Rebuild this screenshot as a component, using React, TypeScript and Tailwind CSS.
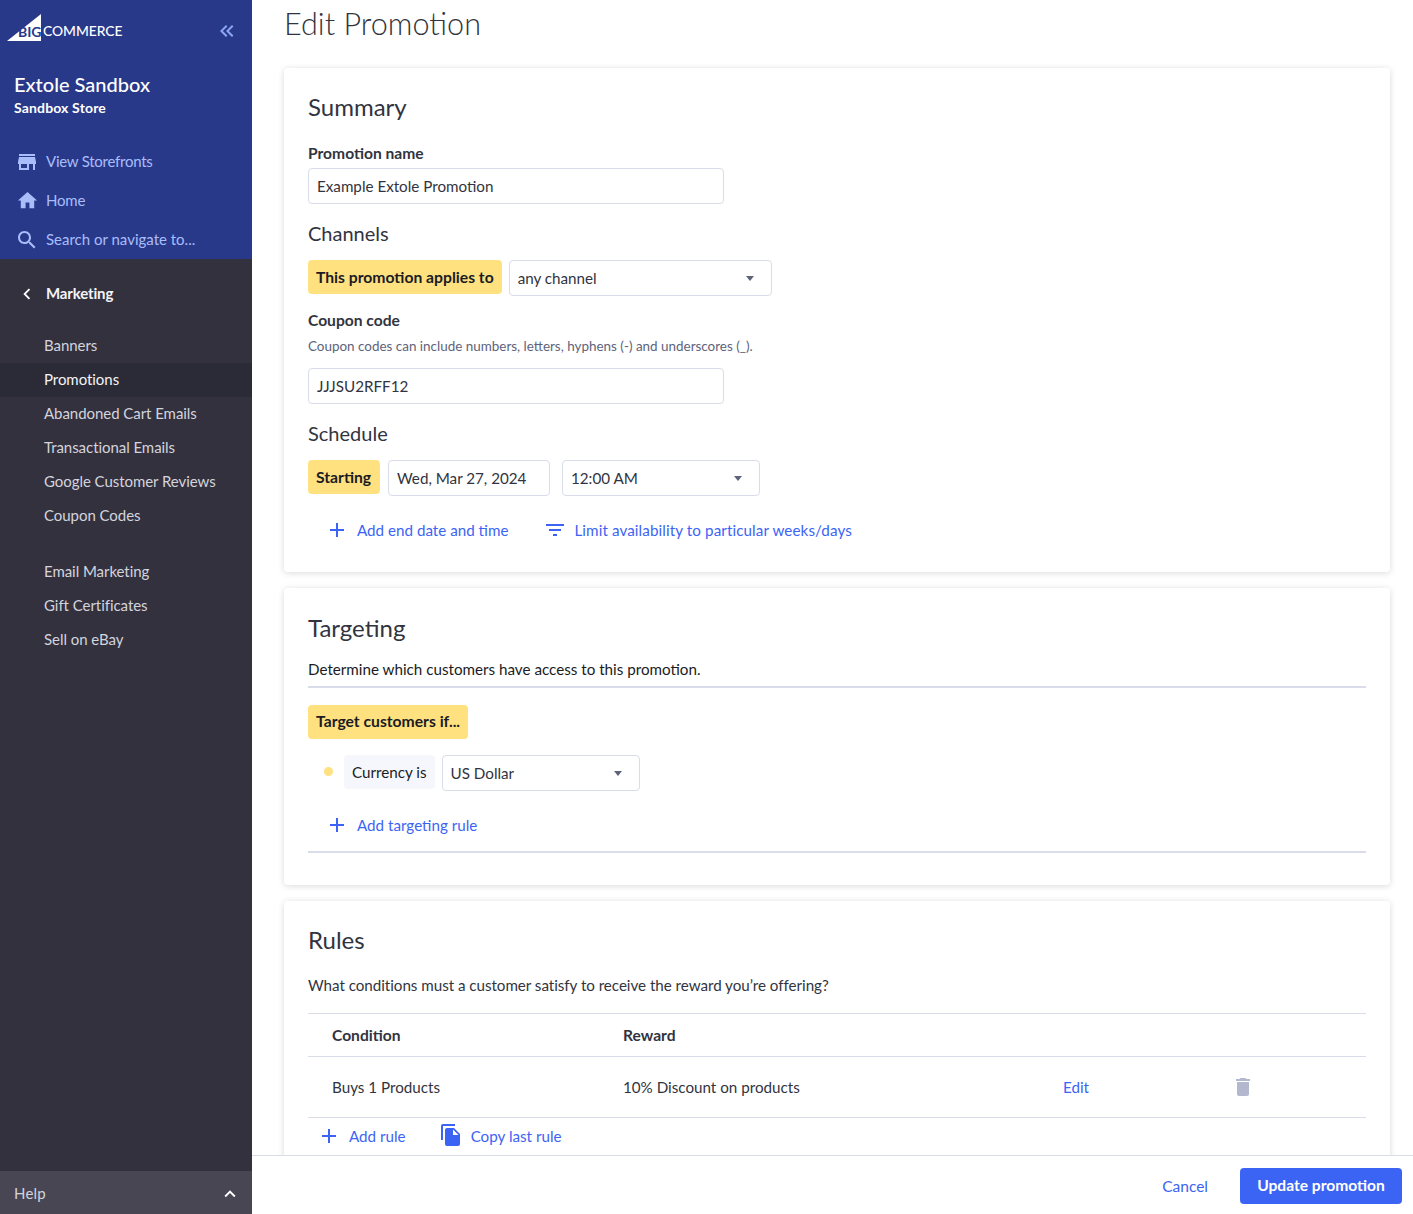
import type { ReactNode } from "react";

const STORE = "M20 4H4v2h16V4zm1 10v-2l-1-5H4l-1 5v2h1v6h10v-6h4v6h2v-6h1zm-9 4H6v-4h6v4z";
const HOME = "M10 20v-6h4v6h5v-8h3L12 3 2 12h3v8z";
const SEARCH =
    "M15.5 14h-.79l-.28-.27C15.41 12.59 16 11.11 16 9.5 16 5.91 13.09 3 9.5 3S3 5.91 3 9.5 5.91 16 9.5 16c1.61 0 3.09-.59 4.23-1.57l.27.28v.79l5 4.99L20.49 19l-4.99-5zm-6 0C7.01 14 5 11.99 5 9.5S7.01 5 9.5 5 14 7.01 14 9.5 11.99 14 9.5 14z";
const ADD = "M19 13h-6v6h-2v-6H5v-2h6V5h2v6h6v2z";
const FILTER = "M10 18h4v-2h-4v2zM3 6v2h18V6H3zm3 7h12v-2H6v2z";
const COPY =
    "M16 1H4c-1.1 0-2 .9-2 2v14h2V3h12V1zm-1 4l6 6v10c0 1.1-.9 2-2 2H7.99C6.89 23 6 22.1 6 21l.01-14c0-1.1.89-2 1.99-2h7zm-1 7h5.5L14 6.5V12z";
const TRASH = "M6 19c0 1.1.9 2 2 2h8c1.1 0 2-.9 2-2V7H6v12zM19 4h-3.5l-1-1h-5l-1 1H5v2h14V4z";
const CHEVRON_LEFT = "M15.41 7.41L14 6l-6 6 6 6 1.41-1.41L10.83 12z";
const CHEVRON_UP = "M12 8l-6 6 1.41 1.41L12 10.83l4.59 4.58L18 14z";
const DOUBLE_LEFT =
    "M18.41 7.41L17 6l-6 6 6 6 1.41-1.41L13.83 12zM12.41 7.41L11 6l-6 6 6 6 1.41-1.41L7.83 12z";

function Icon({ d, className }: { d: string; className: string }) {
    return (
        <svg viewBox="0 0 24 24" fill="currentColor" className={className}>
            <path d={d} />
        </svg>
    );
}

function Logo() {
    return (
        <div className="relative h-[28px] w-[120px]">
            <svg viewBox="0 0 35 27" className="absolute left-0 top-0 h-[27px] w-[35px]">
                <polygon points="0,27 34,0 34,27" fill="#ffffff" />
            </svg>
            <span className="absolute left-[11px] top-[9px] text-[14px] font-bold leading-[17px] text-[#28398a]">
                BIG
            </span>
            <span className="absolute left-[36px] top-[8px] text-[13.8px] font-medium leading-[17px] text-white">
                COMMERCE
            </span>
        </div>
    );
}

function TopLink({ d, label, size, textClass }: { d: string; label: string; size: string; textClass: string }) {
    return (
        <div className="flex h-[39px] items-center text-[#a9bdfb]">
            <div className="flex w-[46px] justify-center pl-[8px]">
                <Icon d={d} className={size} />
            </div>
            <span className={`text-[15px] ${textClass}`}>{label}</span>
        </div>
    );
}

function SideItem({ label, active }: { label: string; active?: boolean }) {
    return (
        <div
            className={`flex h-[34px] items-center pb-[2px] pl-[44px] text-[15px] tracking-[-0.05px] ${
                active ? "bg-[#2b2a37] text-[#f4f4f7]" : "text-[#d3d4dc]"
            }`}
        >
            {label}
        </div>
    );
}

function Sidebar() {
    return (
        <aside className="flex h-full w-[252px] shrink-0 flex-col bg-[#34313f]">
            <div className="h-[259px] bg-[#28398a] pt-[14px]">
                <div className="flex items-start justify-between pl-[7px] pr-[13px]">
                    <Logo />
                    <Icon d={DOUBLE_LEFT} className="mt-[5px] h-[24px] w-[24px] text-[#8da5f5]" />
                </div>
                <div className="mt-[27px] pl-[14px] text-[20px] font-medium leading-[28px] text-white">Extole Sandbox</div>
                <div className="pl-[14px] text-[14px] font-bold leading-[20px] tracking-[0.15px] text-white">Sandbox Store</div>
                <div className="mt-[24px]">
                    <TopLink d={STORE} label="View Storefronts" size="h-[24px] w-[24px]" textClass="tracking-[-0.25px]" />
                    <TopLink d={HOME} label="Home" size="h-[23px] w-[23px]" textClass="tracking-[-0.2px]" />
                    <TopLink d={SEARCH} label="Search or navigate to..." size="h-[24px] w-[24px]" textClass="tracking-[0px]" />
                </div>
            </div>
            <div className="flex h-[69px] items-center text-white">
                <div className="flex w-[46px] justify-center pl-[8px]">
                    <Icon d={CHEVRON_LEFT} className="h-[22px] w-[22px]" />
                </div>
                <span className="text-[15px] font-bold tracking-[-0.15px] text-[#f4f4f7]">Marketing</span>
            </div>
            <div className="pt-[1px]">
                <SideItem label="Banners" />
                <SideItem label="Promotions" active />
                <SideItem label="Abandoned Cart Emails" />
                <SideItem label="Transactional Emails" />
                <SideItem label="Google Customer Reviews" />
                <SideItem label="Coupon Codes" />
            </div>
            <div className="mt-[22px]">
                <SideItem label="Email Marketing" />
                <SideItem label="Gift Certificates" />
                <SideItem label="Sell on eBay" />
            </div>
            <div className="mt-auto flex h-[43px] items-center justify-between bg-[#484653] pl-[14px] pr-[11px] pt-[2px] text-[#d3d4dc]">
                <span className="text-[15px] tracking-[0.2px]">Help</span>
                <Icon d={CHEVRON_UP} className="h-[22px] w-[22px] text-white" />
            </div>
        </aside>
    );
}

function Card({ className, children }: { className: string; children: ReactNode }) {
    return (
        <section className={`rounded-[4px] bg-white px-[24px] shadow-[0_1px_6px_rgba(49,52,64,0.18)] ${className}`}>
            {children}
        </section>
    );
}

function Field({ value, className }: { value: string; className: string }) {
    return (
        <div className={`flex h-[36px] items-center rounded-[4px] border border-[#d9dce9] bg-white pl-[8px] pt-[1px] text-[#313440] ${className}`}>
            {value}
        </div>
    );
}

function Select({ value, className }: { value: string; className: string }) {
    return (
        <div className={`flex h-[36px] items-center justify-between rounded-[4px] border border-[#d9dce9] bg-white pl-[8px] pr-[17px] text-[#313440] ${className}`}>
            <span className="pt-[1px]">{value}</span>
            <span className="h-0 w-0 border-x-[4px] border-t-[5px] border-x-transparent border-t-[#5e637a]" />
        </div>
    );
}

function Chip({ children, className }: { children: ReactNode; className?: string }) {
    return (
        <div className={`flex h-[34px] items-center rounded-[4px] bg-[#ffe180] px-[8px] text-[15.7px] font-bold text-[#1a1b23] ${className ?? ""}`}>
            {children}
        </div>
    );
}

function LinkBtn({ d, label, iconClass, textClass }: { d: string; label: string; iconClass: string; textClass?: string }) {
    return (
        <div className="flex items-center text-[#3c64f4]">
            <Icon d={d} className={iconClass} />
            <span className={`pt-[1px] ${textClass ?? ""}`}>{label}</span>
        </div>
    );
}

function SectionHeading({ children, className }: { children: ReactNode; className: string }) {
    return <h3 className={`text-[20px] leading-[28px] text-[#313440] ${className}`}>{children}</h3>;
}

function CardTitle({ children }: { children: ReactNode }) {
    return <h2 className="text-[24px] leading-[32px] text-[#313440]">{children}</h2>;
}

function Summary() {
    return (
        <Card className="h-[504px] pt-[23px]">
            <CardTitle>Summary</CardTitle>
            <div className="mt-[18px] text-[15.6px] font-bold leading-[24px] text-[#313440]">Promotion name</div>
            <Field value="Example Extole Promotion" className="mt-[3px] w-[416px]" />
            <SectionHeading className="mt-[15px]">Channels</SectionHeading>
            <div className="mt-[13px] flex items-start gap-[7px]">
                <Chip className="pt-[1px]">This promotion applies to</Chip>
                <Select value="any channel" className="w-[263px]" />
            </div>
            <div className="mt-[12px] text-[15.6px] font-bold leading-[24px] text-[#313440]">Coupon code</div>
            <div className="mt-[4px] text-[13.45px] leading-[20px] text-[#5e637a]">
                Coupon codes can include numbers, letters, hyphens (-) and underscores (_).
            </div>
            <Field value="JJJSU2RFF12" className="mt-[12px] w-[416px]" />
            <SectionHeading className="mt-[15px]">Schedule</SectionHeading>
            <div className="mt-[13px] flex items-start">
                <Chip className="w-[72px] pt-[1px]">Starting</Chip>
                <Field value="Wed, Mar 27, 2024" className="ml-[8px] w-[162px]" />
                <Select value="12:00 AM" className="ml-[12px] w-[198px]" />
            </div>
            <div className="mt-[22px] flex h-[24px] items-center pl-[17px]">
                <LinkBtn d={ADD} label="Add end date and time" iconClass="mr-[8px] h-[24px] w-[24px]" />
                <div className="ml-[35px]">
                    <LinkBtn
                        d={FILTER}
                        label="Limit availability to particular weeks/days"
                        iconClass="mr-[7px] h-[24px] w-[24px]"
                        textClass="tracking-[0.1px]"
                    />
                </div>
            </div>
        </Card>
    );
}

function Targeting() {
    return (
        <Card className="mt-[16px] h-[297px] pt-[24px]">
            <CardTitle>Targeting</CardTitle>
            <div className="mt-[13px] border-b-2 border-[#d9dce9] pb-[5px] leading-[24px] text-[#1a1b23]">
                Determine which customers have access to this promotion.
            </div>
            <div className="mt-[17px] flex">
                <Chip>Target customers if...</Chip>
            </div>
            <div className="mt-[16px] flex items-start pl-[16px]">
                <span className="mt-[12px] h-[9px] w-[9px] rounded-full bg-[#ffe180]" />
                <div className="ml-[11px] flex h-[34px] items-center rounded-[4px] bg-[#f6f7fc] px-[8px] pt-[1px] text-[#1a1b23]">
                    Currency is
                </div>
                <Select value="US Dollar" className="ml-[7px] w-[198px]" />
            </div>
            <div className="mt-[22px] flex h-[24px] items-center pl-[17px]">
                <LinkBtn d={ADD} label="Add targeting rule" iconClass="mr-[8px] h-[24px] w-[24px]" />
            </div>
            <div className="mt-[14px] border-b-2 border-[#d9dce9]" />
        </Card>
    );
}

function Rules() {
    return (
        <Card className="mt-[16px] h-[300px] pt-[23px]">
            <CardTitle>Rules</CardTitle>
            <div className="mt-[17px] leading-[24px] tracking-[-0.04px] text-[#313440]">
                What conditions must a customer satisfy to receive the reward you’re offering?
            </div>
            <table className="mt-[16px] w-full border-t border-[#d9dce9] text-left text-[#313440]">
                <thead>
                    <tr className="h-[43px] border-b border-[#d9dce9]">
                        <th className="w-[315px] pl-[24px] pt-[2px] text-[15.6px] font-bold">Condition</th>
                        <th className="w-[440px] pt-[2px] text-[15.6px] font-bold">Reward</th>
                        <th className="w-[172px]" />
                        <th />
                    </tr>
                </thead>
                <tbody>
                    <tr className="h-[61px] border-b border-[#d9dce9]">
                        <td className="pl-[24px] pt-[1px]">Buys 1 Products</td>
                        <td className="pt-[1px]">10% Discount on products</td>
                        <td className="pt-[1px] text-[#3c64f4]">Edit</td>
                        <td>
                            <Icon d={TRASH} className="-ml-[4px] -mt-[1px] h-[24px] w-[24px] text-[#b4b8cf]" />
                        </td>
                    </tr>
                </tbody>
            </table>
            <div className="mt-[5px] flex h-[26px] items-center pl-[9px]">
                <LinkBtn d={ADD} label="Add rule" iconClass="mr-[8px] h-[24px] w-[24px]" />
                <div className="ml-[33px]">
                    <LinkBtn d={COPY} label="Copy last rule" iconClass="-mt-[1px] mr-[8px] h-[24px] w-[24px]" />
                </div>
            </div>
        </Card>
    );
}

export default function App() {
    return (
        <div className="flex h-[1214px] w-[1413px] overflow-hidden bg-white font-['Lato','Liberation_Sans',sans-serif] text-[15.2px]">
            <Sidebar />
            <main className="flex min-w-0 flex-1 flex-col">
                <div className="min-h-0 flex-1 overflow-hidden pl-[32px] pr-[23px]">
                    <h1 className="pt-[4px] text-[30.6px] font-light leading-[40px] text-[#313440]">Edit Promotion</h1>
                    <div className="mt-[24px]">
                        <Summary />
                        <Targeting />
                        <Rules />
                    </div>
                </div>
                <footer className="flex h-[59px] shrink-0 items-center justify-end gap-[32px] border-t border-[#d9dce9] bg-white pr-[11px] pt-[1px]">
                    <span className="pt-[2px] text-[15.5px] text-[#3c64f4]">Cancel</span>
                    <div className="flex h-[36px] w-[162px] items-center justify-center rounded-[4px] bg-[#3c64f4] pt-[1px] text-[15.6px] font-bold text-white">
                        Update promotion
                    </div>
                </footer>
            </main>
        </div>
    );
}
